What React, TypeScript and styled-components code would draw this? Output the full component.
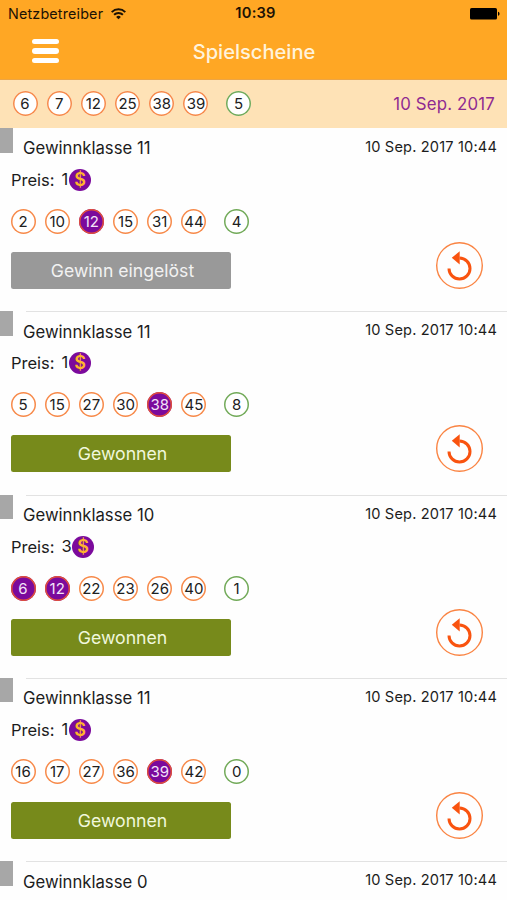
import React from "react";
import styled, { createGlobalStyle } from "styled-components";

const GlobalStyle = createGlobalStyle`
  * { box-sizing: border-box; }
  html, body { margin: 0; height: 900px; overflow: hidden; background: #fefefe; }
  body { font-family: Inter, "Liberation Sans", sans-serif; color: #1c1c1c; }
`;

const Screen = styled.main`
  width: 507px;
  height: 900px;
  overflow: hidden;
  background: #fefefe;
  white-space: nowrap;
`;

const Header = styled.header`
  height: 80px;
  background: #ffa724;
  border-bottom: 1px solid #eda544;
`;

const StatusBar = styled.div`
  height: 27px;
  display: grid;
  grid-template-columns: 1fr auto 1fr;
  align-items: center;
  padding: 0 7px 0 8px;
  color: #1b1204;
  font-size: 14.3px;
  line-height: 27px;
`;

const Carrier = styled.div`
  display: flex;
  align-items: center;
  gap: 8px;
  letter-spacing: 0.18px;
`;

const Clock = styled.div`
  margin-left: 3px;
  font-weight: 600;
  font-size: 14.7px;
  letter-spacing: 0.2px;
`;

const Battery = styled.svg`
  justify-self: end;
  display: block;
`;

const NavBar = styled.div`
  height: 52px;
  display: grid;
  grid-template-columns: 1fr auto 1fr;
  align-items: center;
`;

const MenuButton = styled.button`
  display: flex;
  flex-direction: column;
  gap: 4px;
  width: 27px;
  margin: -4px 0 0 31.5px;
  padding: 0;
  border: 0;
  background: none;
`;

const MenuLine = styled.span`
  height: 5.6px;
  border-radius: 3px;
  background: #fff;
`;

const Title = styled.h1`
  margin: -2px 0 0 1px;
  font-size: 20.1px;
  line-height: 26px;
  font-weight: 500;
  color: #fff3dc;
`;

const DrawBar = styled.section`
  height: 48px;
  display: flex;
  align-items: center;
  justify-content: space-between;
  padding: 0 12px 1px 12.5px;
  background: #fee2b6;
`;

const DrawDate = styled.time`
  color: #8f2a91;
  font-size: 16.8px;
  letter-spacing: 0.18px;
`;

const Balls = styled.div`
  display: flex;
  gap: 9.2px;
`;

type BallKind = "plain" | "hit" | "bonus";

const ballBorder = { plain: "#f78a4a", hit: "#e2503a", bonus: "#72aa59" };

const Ball = styled.span<{ $kind: BallKind }>`
  width: 25px;
  height: 25px;
  display: flex;
  align-items: center;
  justify-content: center;
  margin-left: ${(p) => (p.$kind === "bonus" ? "8.5px" : "0")};
  box-shadow: inset 0 0 0 1.5px ${(p) => ballBorder[p.$kind]};
  border-radius: 50%;
  background: ${(p) => (p.$kind === "hit" ? "#7b0a9c" : "#fff")};
  color: ${(p) => (p.$kind === "hit" ? "#f3e3f8" : "#202020")};
  font-size: 15px;
  line-height: 25px;
`;

const Ticket = styled.article`
  height: 183.3px;
  display: grid;
  grid-template-columns: 1fr auto;
  grid-template-rows: 183.3px 1px;
`;

const Details = styled.div`
  display: flex;
  flex-direction: column;
  align-items: flex-start;
`;

const Heading = styled.div`
  display: flex;
  height: 37px;
  gap: 10px;
`;

const Marker = styled.span`
  width: 13px;
  height: 24.5px;
  background: #a7a7a7;
`;

const PrizeClass = styled.h2`
  margin: 9.4px 0 0;
  font-size: 16.7px;
  line-height: 22px;
  font-weight: 400;
`;

const Prize = styled.div`
  display: flex;
  align-items: center;
  height: 30px;
  margin-left: 11px;
  font-size: 16.5px;
`;

const Amount = styled.span`
  min-width: 7.5px;
  margin: -2px 0 0 7px;
`;

const Coin = styled.svg`
  display: block;
  width: 22px;
  height: 22px;
  margin-left: 0.4px;
`;

const CoinSign = styled.text`
  font-family: Inter, "Liberation Sans", sans-serif;
  font-size: 18px;
  font-weight: 600;
`;

const Numbers = styled.div`
  margin: 14px 0 0 10.5px;
`;

const Action = styled.button<{ $claimed: boolean }>`
  width: 220px;
  height: 37px;
  margin: 18px 0 0 11px;
  padding: 0 0 0 3px;
  border: 0;
  border-radius: 2.5px;
  background: ${(p) => (p.$claimed ? "#999" : "#778a1b")};
  color: ${(p) => (p.$claimed ? "#f2f2f2" : "#f0f7dc")};
  font-family: inherit;
  font-size: ${(p) => (p.$claimed ? "17.6px" : "17.7px")};
  line-height: 37px;
`;

const Side = styled.div`
  display: flex;
  flex-direction: column;
  align-items: flex-end;
  padding: 8px 10px 0 0;
`;

const Stamp = styled.time`
  font-size: 14.6px;
  line-height: 22px;
  letter-spacing: 0.16px;
`;

const Repeat = styled.button`
  width: 47px;
  height: 47px;
  margin: 84px 14px 0 0;
  padding: 0;
  border: 0;
  background: none;
`;

const Separator = styled.div`
  grid-column: 1 / -1;
  height: 1px;
  margin-left: 26px;
  background: #e2e2e2;
`;

const WifiIcon = () => (
  <svg width="15" height="12" viewBox="0 0 15 12" fill="none" stroke="#1b1204" strokeWidth="2">
    <path d="M.7 4.1a9.8 9.8 0 0 1 13.6 0M3.1 6.8a6.3 6.3 0 0 1 8.8 0" />
    <path d="M7.5 11.3 5.1 8.9a3.4 3.4 0 0 1 4.8 0Z" fill="#1b1204" stroke="none" />
  </svg>
);

const RepeatIcon = () => (
  <svg width="47" height="47" viewBox="0 0 47 47" fill="none">
    <circle cx="23.5" cy="23.5" r="22.8" stroke="#fa8443" strokeWidth="1.4" />
    <path d="M13 26.5A10.5 10.5 0 1 0 23.5 16" stroke="#f9530f" strokeWidth="3" />
    <path d="M15.8 15.8 23.7 9.3V22.6Z" fill="#f9530f" />
  </svg>
);

const CoinIcon = () => (
  <Coin viewBox="0 0 22 22">
    <circle cx="11" cy="11" r="11" fill="#7b0a9c" />
    <CoinSign x="11" y="17.4" textAnchor="middle" fill="#ffb52b">$</CoinSign>
  </Coin>
);

interface TicketData {
  prizeClass: number;
  prize: number;
  numbers: number[];
  hits: number[];
  bonus: number;
  claimed?: boolean;
}

const tickets: TicketData[] = [
  { prizeClass: 11, prize: 1, numbers: [2, 10, 12, 15, 31, 44], hits: [12], bonus: 4, claimed: true },
  { prizeClass: 11, prize: 1, numbers: [5, 15, 27, 30, 38, 45], hits: [38], bonus: 8 },
  { prizeClass: 10, prize: 3, numbers: [6, 12, 22, 23, 26, 40], hits: [6, 12], bonus: 1 },
  { prizeClass: 11, prize: 1, numbers: [16, 17, 27, 36, 39, 42], hits: [39], bonus: 0 },
];

const BallRow = ({ numbers, hits = [], bonus }: { numbers: number[]; hits?: number[]; bonus: number }) => (
  <Balls>
    {numbers.map((n) => (
      <Ball key={n} $kind={hits.includes(n) ? "hit" : "plain"}>{n}</Ball>
    ))}
    <Ball $kind="bonus">{bonus}</Ball>
  </Balls>
);

const TicketHeading = ({ prizeClass }: { prizeClass: number }) => (
  <Heading>
    <Marker />
    <PrizeClass>Gewinnklasse {prizeClass}</PrizeClass>
  </Heading>
);

export default function App() {
  return (
    <Screen>
      <GlobalStyle />
      <Header>
        <StatusBar>
          <Carrier>Netzbetreiber <WifiIcon /></Carrier>
          <Clock>10:39</Clock>
          <Battery width="30" height="12" viewBox="0 0 30 12">
            <rect width="27" height="11.6" rx="1.6" />
            <path d="M28 3.8c2 .5 2 3.5 0 4Z" />
          </Battery>
        </StatusBar>
        <NavBar>
          <MenuButton aria-label="Menü">
            <MenuLine /><MenuLine /><MenuLine />
          </MenuButton>
          <Title>Spielscheine</Title>
        </NavBar>
      </Header>
      <DrawBar>
        <BallRow numbers={[6, 7, 12, 25, 38, 39]} bonus={5} />
        <DrawDate>10 Sep. 2017</DrawDate>
      </DrawBar>
      {tickets.map((t, i) => (
        <Ticket key={i}>
          <Details>
            <TicketHeading prizeClass={t.prizeClass} />
            <Prize>Preis: <Amount>{t.prize}</Amount><CoinIcon /></Prize>
            <Numbers><BallRow numbers={t.numbers} hits={t.hits} bonus={t.bonus} /></Numbers>
            <Action $claimed={!!t.claimed}>{t.claimed ? "Gewinn eingelöst" : "Gewonnen"}</Action>
          </Details>
          <Side>
            <Stamp>10 Sep. 2017 10:44</Stamp>
            <Repeat aria-label="Wiederholen"><RepeatIcon /></Repeat>
          </Side>
          <Separator />
        </Ticket>
      ))}
      <Ticket>
        <Details><TicketHeading prizeClass={0} /></Details>
        <Side><Stamp>10 Sep. 2017 10:44</Stamp></Side>
      </Ticket>
    </Screen>
  );
}
